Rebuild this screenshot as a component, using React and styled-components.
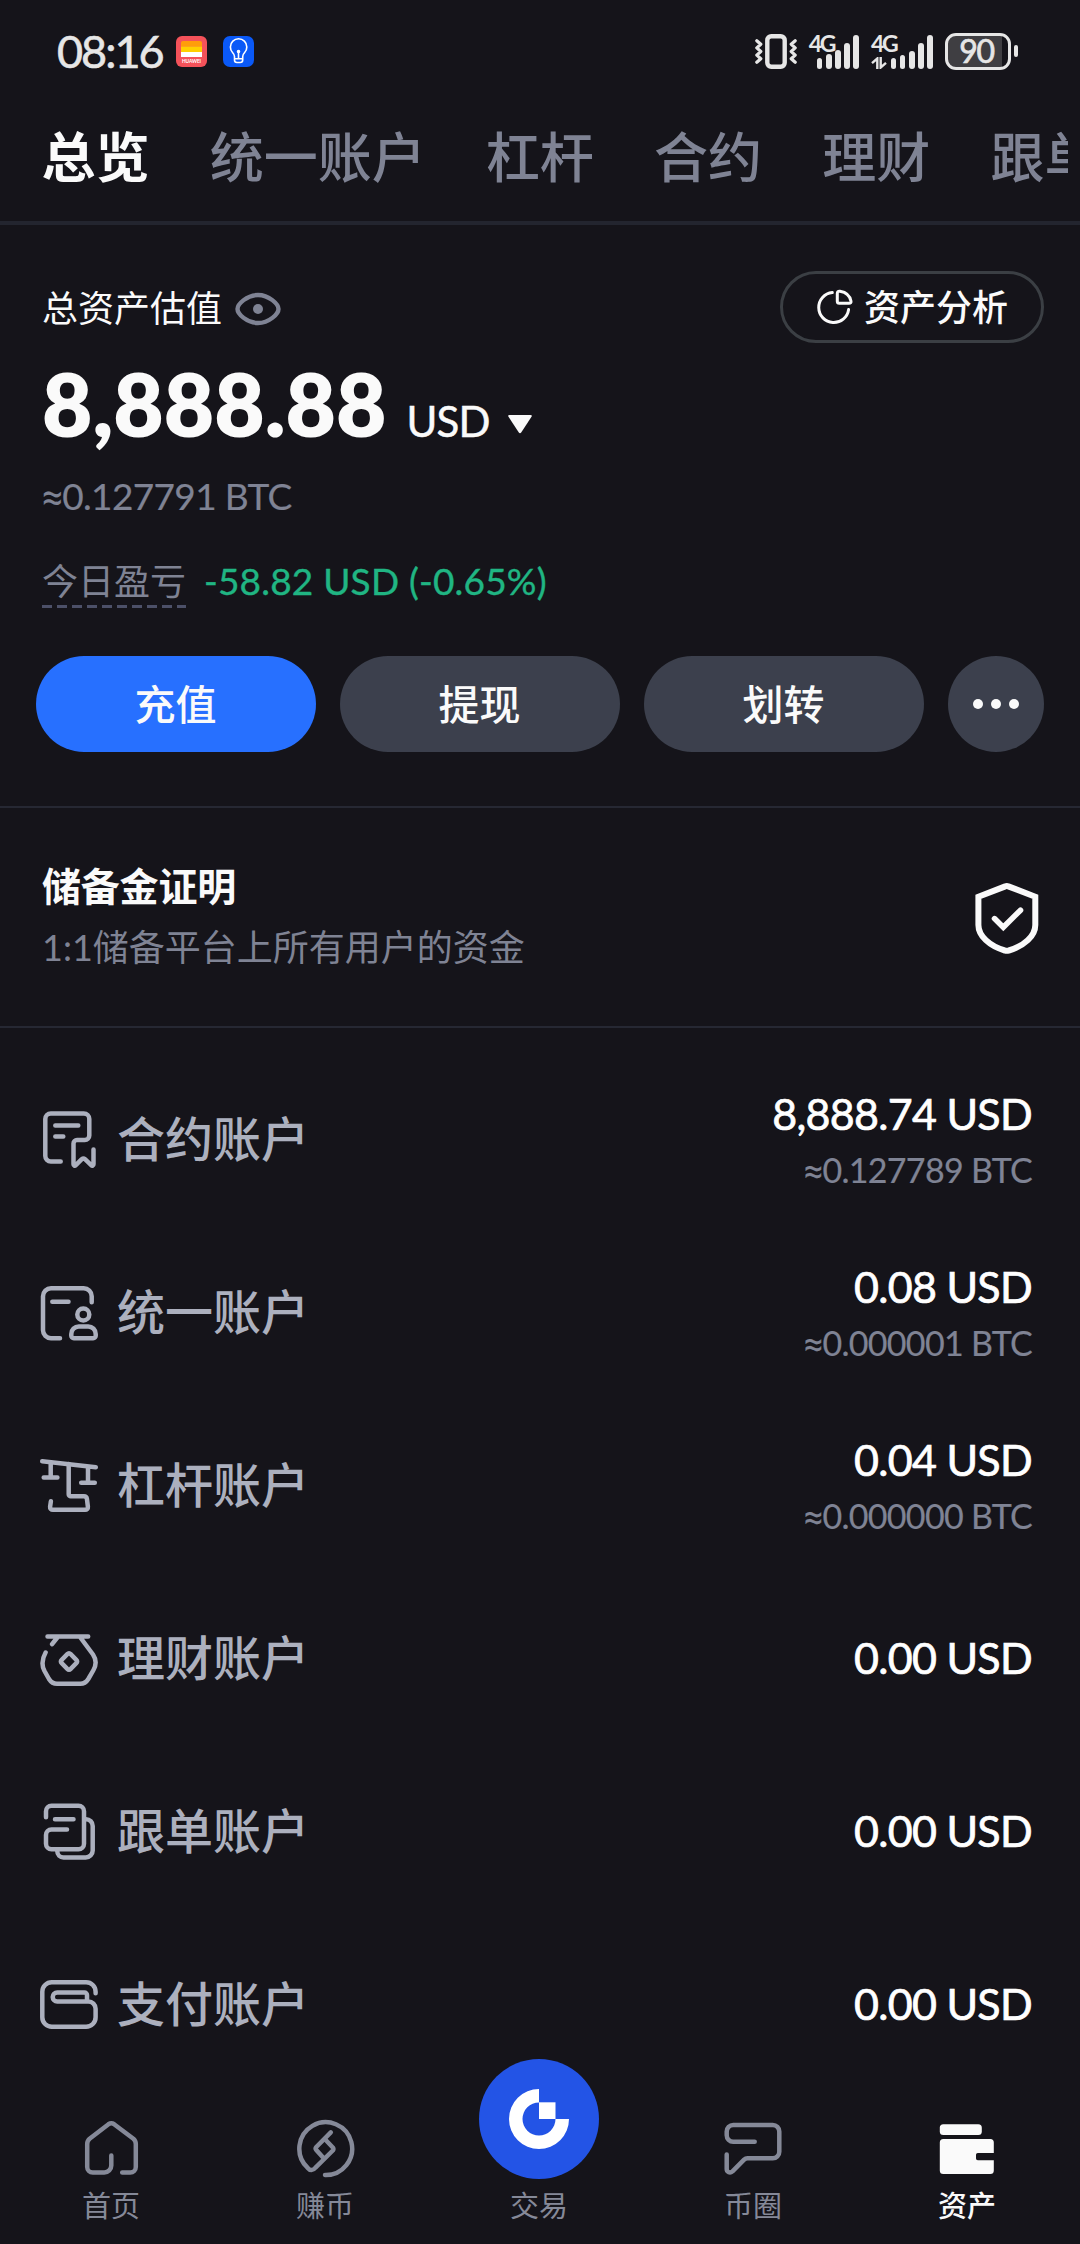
import React, { useState } from 'react';
import styled, { createGlobalStyle } from 'styled-components';

const GlobalStyle = createGlobalStyle`
    * {
        box-sizing: border-box;
    }
    body {
        margin: 0;
        background: #15141a;
        font-family: Lato, 'Noto Sans CJK SC', sans-serif;
    }
    svg {
        display: block;
        flex-shrink: 0;
    }
`;

const Screen = styled.div`
    width: 1080px;
    height: 2244px;
    display: flex;
    flex-direction: column;
    overflow: hidden;
    background: #15141a;
    color: #fafafa;
`;

/* status bar */
const StatusBar = styled.div`
    height: 102px;
    flex-shrink: 0;
    display: flex;
    align-items: center;
    padding: 0 62px 0 57px;
    color: #e6e6e6;
`;

const Clock = styled.span`
    width: 119px;
    font-size: 45px;
    line-height: 54px;
    letter-spacing: -2px;
    -webkit-text-stroke: 0.6px;
`;

const AppIcons = styled.div`
    display: flex;
    gap: 16px;
    margin-right: auto;
`;

const Signal = styled.div`
    display: flex;
    align-items: flex-end;
    height: 35px;
    margin-left: ${(props) => props.$left}px;
`;

const Network = styled.div`
    width: ${(props) => props.$width}px;
    height: 35px;
    margin-right: ${(props) => props.$overlap}px;
    font-size: 23px;
    font-weight: 700;
    line-height: 18px;
    letter-spacing: -2.5px;
    white-space: nowrap;
    svg {
        margin-top: 5px;
    }
`;

const Bar = styled.i`
    width: 5.6px;
    height: ${(props) => props.$height}px;
    margin-left: 3.6px;
    border-radius: 3px;
    background: #e6e6e6;
`;

const Battery = styled.div`
    width: 66px;
    height: 37px;
    margin-left: 12px;
    border: 3px solid #e6e6e6;
    border-radius: 11px;
    background: linear-gradient(90deg, #3f3e42 54px, transparent 54px);
    font-size: 32px;
    line-height: 30px;
    letter-spacing: -1.2px;
    padding-right: 3px;
    text-align: center;
    -webkit-text-stroke: 0.7px;
`;

const BatteryTip = styled.i`
    width: 4px;
    height: 12px;
    margin-left: 3px;
    border-radius: 2px;
    background: #e6e6e6;
`;

/* tabs */
const Tabs = styled.nav`
    height: 123px;
    flex-shrink: 0;
    border-bottom: 4px solid #23252f;
`;

const TabsScroll = styled.div`
    width: 1068px;
    display: flex;
    gap: 60.2px;
    padding: 16px 0 0 41.5px;
    overflow: hidden;
`;

const Tab = styled.button`
    flex-shrink: 0;
    padding: 0;
    border: 0;
    background: none;
    font-family: inherit;
    font-size: 54px;
    line-height: 80px;
    font-weight: ${(props) => (props.$active ? 700 : 500)};
    color: ${(props) => (props.$active ? '#fafafa' : '#7f8394')};
`;

/* summary */
const Summary = styled.section`
    flex-shrink: 0;
    padding: 46px 36px 54px;
    border-bottom: 2px solid #262833;
`;

const TitleRow = styled.div`
    height: 72px;
    display: flex;
    align-items: center;
    padding-left: 6px;
`;

const Title = styled.span`
    margin: 2px 13px 0 0;
    font-size: 36px;
    line-height: 44px;
`;

const AnalysisButton = styled.button`
    width: 264px;
    height: 72px;
    margin-left: auto;
    display: flex;
    align-items: center;
    gap: 11px;
    padding: 0 0 0 34px;
    border: 3px solid #3b3f44;
    border-radius: 36px;
    background: none;
    color: #fafafa;
    font-family: inherit;
    font-size: 36px;
    font-weight: 500;
    line-height: 44px;
`;

const BalanceRow = styled.div`
    height: 100px;
    margin-top: 11px;
    padding-left: 6px;
    display: flex;
    align-items: baseline;
    line-height: 100px;
`;

const Balance = styled.strong`
    font-size: 87px;
    font-weight: 800;
`;

const Currency = styled.span`
    margin: 0 18px 0 20px;
    font-size: 42px;
    letter-spacing: -0.8px;
    -webkit-text-stroke: 0.5px;
`;

const Approx = styled.div`
    height: 44px;
    margin-top: 20px;
    padding-left: 6px;
    font-size: 37px;
    line-height: 44px;
    letter-spacing: -0.65px;
    color: #7f8394;
    -webkit-text-stroke: 0.2px;
`;

const AlmostSign = styled.span`
    font-family: Roboto, sans-serif;
    line-height: 1;
`;

const PnlRow = styled.div`
    display: flex;
    margin-top: 41px;
    padding-left: 6px;
    gap: 18px;
    line-height: 44px;
`;

const PnlLabel = styled.span`
    width: 144px;
    height: 49px;
    font-size: 36px;
    color: #7f8394;
    background: repeating-linear-gradient(90deg, #4c5068 0 10px, transparent 10px 15px) bottom / 100% 3px no-repeat;
`;

const PnlValue = styled.span`
    font-size: 37px;
    letter-spacing: 0.2px;
    color: #20b583;
    -webkit-text-stroke: 0.4px;
`;

const Actions = styled.div`
    display: flex;
    gap: 24px;
    margin-top: 48px;
`;

const ActionButton = styled.button`
    flex: ${(props) => (props.$round ? '0 0 96px' : '1')};
    height: 96px;
    display: flex;
    align-items: center;
    justify-content: center;
    padding: ${(props) => (props.$round ? '0' : '0 1px 4px 0')};
    border: 0;
    border-radius: 48px;
    background: ${(props) => (props.$primary ? '#2770ff' : '#3c404d')};
    color: #fafafa;
    font-family: inherit;
    font-size: 41px;
    font-weight: 500;
`;

/* proof of reserves */
const Reserve = styled.section`
    height: 220px;
    flex-shrink: 0;
    display: flex;
    justify-content: space-between;
    padding: 54px 38px 0 42px;
    border-bottom: 2px solid #262833;
    svg {
        margin-top: 20px;
    }
`;

const ReserveTitle = styled.div`
    font-size: 39px;
    font-weight: 700;
    line-height: 48px;
    letter-spacing: -0.2px;
`;

const ReserveText = styled.div`
    margin-top: 15px;
    font-size: 36px;
    line-height: 44px;
    color: #7f8394;
`;

/* accounts */
const AccountList = styled.ul`
    flex: 1;
    min-height: 0;
    margin: 0;
    padding: 24px 48px 0 39px;
    overflow: hidden;
    list-style: none;
`;

const AccountRow = styled.li`
    height: 173px;
    display: flex;
    align-items: center;
    color: #acb0be;
`;

const AccountName = styled.span`
    margin-left: 18px;
    font-size: 48px;
    font-weight: 500;
    line-height: 60px;
`;

const Amounts = styled.div`
    margin-left: auto;
    padding-top: ${(props) => (props.$double ? 7 : 1)}px;
    text-align: right;
`;

const Usd = styled.div`
    font-size: 43px;
    line-height: 56px;
    letter-spacing: -0.7px;
    color: #fff;
    -webkit-text-stroke: 0.7px;
`;

const Btc = styled.div`
    height: 56px;
    font-size: 34px;
    line-height: 56px;
    letter-spacing: -0.7px;
    color: #7f8394;
    -webkit-text-stroke: 0.2px;
`;

/* bottom navigation */
const BottomNav = styled.nav`
    height: 185px;
    flex-shrink: 0;
    display: flex;
    padding: 0 6px 19px 4px;
`;

const NavItem = styled.button`
    flex: 1;
    display: flex;
    flex-direction: column;
    align-items: center;
    justify-content: flex-end;
    gap: 9px;
    padding: 0;
    border: 0;
    background: none;
    font-family: inherit;
    font-size: 29px;
    line-height: 38px;
    font-weight: ${(props) => (props.$active ? 500 : 400)};
    color: ${(props) => (props.$active ? '#fafafa' : '#858998')};
`;

const TradeBadge = styled.span`
    width: 120px;
    height: 120px;
    margin-bottom: -1px;
    border-radius: 60px;
    background: #2354e6;
    display: flex;
    align-items: center;
    justify-content: center;
`;

const LineIcon = ({ size = 60, width = 4.5, children }) => (
    <svg width={size} height={size} viewBox={`0 0 ${size} ${size}`} fill="none" stroke="currentColor"
        strokeWidth={width} strokeLinecap="round" strokeLinejoin="round">
        {children}
    </svg>
);

const ContractIcon = () => (
    <LineIcon>
        <path d="M21.7 52.5H11.8a5.5 5.5 0 0 1-5.5-5.5V10a5.5 5.5 0 0 1 5.5-5.5h33a5.5 5.5 0 0 1 5.5 5.5v16.5a4.5 4.5 0 0 1-4.5 4.5H38a3.5 3.5 0 0 0-3.5 3.5v20.7c0 1.5 1.3 2 2.3 1l6-6q1.6-1.4 3.2 0l6.2 6c1 1 2.3.5 2.3-1V40.5" />
        <path d="M16.3 16.5h23M16.3 27.5h8" />
    </LineIcon>
);

const UnifiedIcon = () => (
    <LineIcon>
        <path d="M21 56.2h-9a8 8 0 0 1-8-8v-34a8 8 0 0 1 8-8h32.7a8 8 0 0 1 8 8v6M13.3 19.8h16.2" />
        <circle cx="44.3" cy="32.5" r="6" />
        <path d="M39.8 44.5h9.4a7.5 7.5 0 0 1 7.5 7.5v1.7a2.5 2.5 0 0 1-2.5 2.5H34.8a2.5 2.5 0 0 1-2.5-2.5V52a7.5 7.5 0 0 1 7.5-7.5z" />
    </LineIcon>
);

const MarginIcon = () => (
    <LineIcon>
        <path d="M3.2 6.2l53.6 6.1M11.7 8v14.5M4.7 22.5h13.7M49 12v15.8M42.2 27.8h13.6" />
        <path d="M29.7 9v30.2a2 2 0 0 0 2 2h13.2a3 3 0 0 1 3 2.6l1 8a2.7 2.7 0 0 1-2.7 3H13.8a2.7 2.7 0 0 1-2.7-3l.8-5.5" />
    </LineIcon>
);

const EarnAccountIcon = () => (
    <LineIcon>
        <path d="M8.5 8.5h40.7M18.3 9.5l-5.2 6.7M41 9l13 17.5q5 7.5.5 15.5l-5.2 9q-3 4.8-8 4.8H18q-5 0-8-4.8l-4.5-8Q1 34.5 6.6 24.5" />
        <path d="M28.3 26.2q1.7-1.7 3.4 0l5.6 5.6q1.7 1.7 0 3.4l-5.6 5.6q-1.7 1.7-3.4 0l-5.6-5.6q-1.7-1.7 0-3.4z" />
    </LineIcon>
);

const CopyIcon = () => (
    <LineIcon>
        <path d="M28 28.5H12.5A5.5 5.5 0 0 0 7 34v8.7a5.5 5.5 0 0 0 5.5 5.5h27a5.5 5.5 0 0 0 5.5-5.5V10.3a5.5 5.5 0 0 0-5.5-5.5h-27A5.5 5.5 0 0 0 7 10.3v5.9M16 18.2h18.5" />
        <path d="M47 18.2a6.7 6.7 0 0 1 6.7 6.7v24.6a7 7 0 0 1-7 7H24.5a6.2 6.2 0 0 1-6.2-6.2v-1.5" />
    </LineIcon>
);

const PayIcon = () => (
    <LineIcon>
        <path d="M56.6 19.3v-1.6a9.5 9.5 0 0 0-9.5-9.5H12.8a9.5 9.5 0 0 0-9.5 9.5v25.6a9.5 9.5 0 0 0 9.5 9.5h34.3a9.5 9.5 0 0 0 9.5-9.5v-8.5a7.3 7.3 0 0 0-7.3-7.3H18.2a4.5 4.5 0 0 1 0-9H45.5a2.5 2.5 0 0 1 2.5 2.5v6" />
    </LineIcon>
);

const HomeIcon = () => (
    <LineIcon>
        <path d="M30.3 37.5v10a7 7 0 0 1-7 7H11.7a5.5 5.5 0 0 1-5.5-5.5V26q0-3.2 2.4-5.3L27.5 6.2q2.8-2 5.6 0l19.3 14.5q2.4 2.1 2.4 5.3v23a5.5 5.5 0 0 1-5.5 5.5H41.2" />
    </LineIcon>
);

const EarnIcon = () => (
    <LineIcon>
        <path d="M30 57A26.4 26.4 0 1 0 12.5 49.7Q16.5 54.5 20.5 49.6L37.8 32.5Q39 31 37.8 29.5L30 21.3" />
        <path d="M35.8 14.3L21.3 29Q20 30.5 21.3 32L28.5 40" />
    </LineIcon>
);

const ChatIcon = () => (
    <LineIcon>
        <path d="M31.7 23.7H10.2a6.5 6.5 0 0 1-6.5-6.5V13.5A6.5 6.5 0 0 1 10.2 7h39.6a6.5 6.5 0 0 1 6.5 6.5v20.3a6.5 6.5 0 0 1-6.5 6.5H24.5q-2 0-3.4 1.4L9.5 53.4c-2.5 2.1-5.8.7-5.8-2.4V36.5" />
    </LineIcon>
);

const WalletIcon = () => (
    <svg width="60" height="60" viewBox="0 0 60 60" fill="currentColor">
        <rect x="2.8" y="6.3" width="42" height="10.8" rx="3.5" />
        <path d="M6.3 21h47a3.5 3.5 0 0 1 3.5 3.5V35H40.8a1.8 1.8 0 0 0-1.8 1.8v3.7a1.8 1.8 0 0 0 1.8 1.8h16v10.2a3.5 3.5 0 0 1-3.5 3.5h-47a3.5 3.5 0 0 1-3.5-3.5v-28A3.5 3.5 0 0 1 6.3 21z" />
    </svg>
);

const TradeIcon = () => (
    <svg width="60" height="60" viewBox="0 0 60 60" fill="#fff">
        <path d="M30 0a30 30 0 1 0 30 30H46.5A16.5 16.5 0 1 1 30 13.5z" />
        <path d="M30 13.3h16.5V30H30z" />
    </svg>
);

const EyeIcon = () => (
    <svg width="46" height="38" viewBox="0 -4 46 38" fill="none" stroke="#7f8394" strokeWidth="4.4">
        <path d="M2.5 17C2.5 12 12 3 23 3s20.5 9 20.5 14S34 31 23 31 2.5 22 2.5 17z" />
        <circle cx="23" cy="17" r="5" fill="#7f8394" stroke="none" />
    </svg>
);

const PieIcon = () => (
    <LineIcon size={36} width={3}>
        <path d="M15.3 3.6a15 15 0 1 0 16.3 17" />
        <path d="M20.3 12.2V4.5q0-2.7 2.7-2.3 9.5 1.6 11 10 .4 2-2 2h-9.7a2 2 0 0 1-2-2z" />
    </LineIcon>
);

const ShieldIcon = () => (
    <LineIcon size={72} width={6}>
        <path d="M35.2 4.4q1.6-.8 3.2 0L65.3 14.7V43c0 11-11 21-26.500 25.5q-2 .7-4 0C19.5 64 8.400 54 8.400 43V14.7z" strokeLinejoin="miter" />
        <path d="M24.5 36.6l8.8 8.6 17.2-17" strokeWidth="5.6" strokeLinejoin="miter" />
    </LineIcon>
);

const HuaweiIcon = () => (
    <svg width="31" height="31" viewBox="0 0 31 31">
        <rect width="31" height="31" rx="6" fill="#f4525a" />
        <path d="M5 7a2 2 0 0 1 2-2h17a2 2 0 0 1 2 2v3.5H5z" fill="#ff9d0a" />
        <path d="M5 10.5h21v5.5H5z" fill="#ffd000" />
        <path d="M5 16h21v5H5z" fill="#fff" />
        <text x="15.5" y="27.3" fontSize="4.8" fontWeight="700" fill="#fff" textAnchor="middle" textLength="19">HUAWEI</text>
    </svg>
);

const BulbIcon = () => (
    <svg width="31" height="31" viewBox="0 0 31 31">
        <rect width="31" height="31" rx="7" fill="#0a59f7" />
        <g fill="none" stroke="#fff" strokeWidth="1.6" strokeLinecap="round" strokeLinejoin="round">
            <path d="M11.5 20.5q0-2-1.8-3.8a8.2 8.2 0 1 1 11.8 0q-1.8 1.8-1.8 3.8v3.5a2.5 2.5 0 0 1-2.5 2.5h-3.2a2.5 2.5 0 0 1-2.5-2.5zM11.5 22.8h8.2M15.5 16v6.5" />
            <circle cx="15.5" cy="15.5" r="1" fill="#fff" />
        </g>
    </svg>
);

const VibrateIcon = () => (
    <svg width="42" height="35" viewBox="0 0 42 35" fill="none" stroke="#e6e6e6">
        <rect x="12.3" y="2.2" width="17.4" height="30.6" rx="4" strokeWidth="4.4" />
        <path d="M1.8 6.8l4 3.5-4 3.6 4 3.6-4 3.6 4 3.6-4 3.5M40.2 6.8l-4 3.5 4 3.6-4 3.6 4 3.6-4 3.6 4 3.5" strokeWidth="3.2" strokeLinejoin="round" strokeLinecap="round" />
    </svg>
);

const DataArrows = () => (
    <svg width="16" height="12" viewBox="0 0 16 12" fill="none" stroke="#e6e6e6" strokeWidth="2.4">
        <path d="M6.3 12V1.5L1 6.2M9.7 0v10.5L15 5.8" />
    </svg>
);

const tabs = ['总览', '统一账户', '杠杆', '合约', '理财', '跟单'];

const accounts = [
    { name: '合约账户', icon: ContractIcon, usd: '8,888.74', btc: '0.127789' },
    { name: '统一账户', icon: UnifiedIcon, usd: '0.08', btc: '0.000001' },
    { name: '杠杆账户', icon: MarginIcon, usd: '0.04', btc: '0.000000' },
    { name: '理财账户', icon: EarnAccountIcon, usd: '0.00' },
    { name: '跟单账户', icon: CopyIcon, usd: '0.00' },
    { name: '支付账户', icon: PayIcon, usd: '0.00' },
];

const navItems = [
    { name: '首页', icon: HomeIcon },
    { name: '赚币', icon: EarnIcon },
    { name: '交易', icon: TradeIcon, badge: true },
    { name: '币圈', icon: ChatIcon },
    { name: '资产', icon: WalletIcon },
];

const App = () => {
    const [tab, setTab] = useState('总览');
    const [page, setPage] = useState('资产');

    return (
        <Screen>
            <GlobalStyle />
            <StatusBar>
                <Clock>08:16</Clock>
                <AppIcons>
                    <HuaweiIcon />
                    <BulbIcon />
                </AppIcons>
                <VibrateIcon />
                <Signal $left={12}>
                    <Network $width={25} $overlap={-20.7}>4G</Network>
                    {[11, 15, 19, 26, 34].map((h) => <Bar key={h} $height={h} />)}
                </Signal>
                <Signal $left={12}>
                    <Network $width={25} $overlap={-9}>4G<DataArrows /></Network>
                    {[11, 14, 18, 26, 34].map((h) => <Bar key={h} $height={h} />)}
                </Signal>
                <Battery>90</Battery>
                <BatteryTip />
            </StatusBar>

            <Tabs>
                <TabsScroll>
                    {tabs.map((name) => (
                        <Tab key={name} $active={name === tab} onClick={() => setTab(name)}>{name}</Tab>
                    ))}
                </TabsScroll>
            </Tabs>

            <Summary>
                <TitleRow>
                    <Title>总资产估值</Title>
                    <EyeIcon />
                    <AnalysisButton><PieIcon />资产分析</AnalysisButton>
                </TitleRow>
                <BalanceRow>
                    <Balance>8,888.88</Balance>
                    <Currency>USD</Currency>
                    <svg width="24" height="22" viewBox="0 0 24 22" fill="#fafafa">
                        <path d="M1.5 0h21q2 0 1 1.8L13.2 17.5q-1.2 1.6-2.4 0L.5 1.8Q-.5 0 1.5 0z" />
                    </svg>
                </BalanceRow>
                <Approx><AlmostSign>≈</AlmostSign>0.127791 BTC</Approx>
                <PnlRow>
                    <PnlLabel>今日盈亏</PnlLabel>
                    <PnlValue>-58.82 USD (-0.65%)</PnlValue>
                </PnlRow>
                <Actions>
                    <ActionButton $primary>充值</ActionButton>
                    <ActionButton>提现</ActionButton>
                    <ActionButton>划转</ActionButton>
                    <ActionButton $round>
                        <svg width="46" height="10" viewBox="0 0 46 10" fill="#fafafa">
                            <circle cx="5" cy="5" r="5" />
                            <circle cx="23" cy="5" r="5" />
                            <circle cx="41" cy="5" r="5" />
                        </svg>
                    </ActionButton>
                </Actions>
            </Summary>

            <Reserve>
                <div>
                    <ReserveTitle>储备金证明</ReserveTitle>
                    <ReserveText>1:1储备平台上所有用户的资金</ReserveText>
                </div>
                <ShieldIcon />
            </Reserve>

            <AccountList>
                {accounts.map(({ name, icon: Icon, usd, btc }) => (
                    <AccountRow key={name}>
                        <Icon />
                        <AccountName>{name}</AccountName>
                        <Amounts $double={!!btc}>
                            <Usd>{usd} USD</Usd>
                            {btc && <Btc><AlmostSign>≈</AlmostSign>{btc} BTC</Btc>}
                        </Amounts>
                    </AccountRow>
                ))}
            </AccountList>

            <BottomNav>
                {navItems.map(({ name, icon: Icon, badge }) => (
                    <NavItem key={name} $active={name === page} onClick={() => setPage(name)}>
                        {badge ? <TradeBadge><Icon /></TradeBadge> : <Icon />}
                        {name}
                    </NavItem>
                ))}
            </BottomNav>
        </Screen>
    );
};

export default App;
